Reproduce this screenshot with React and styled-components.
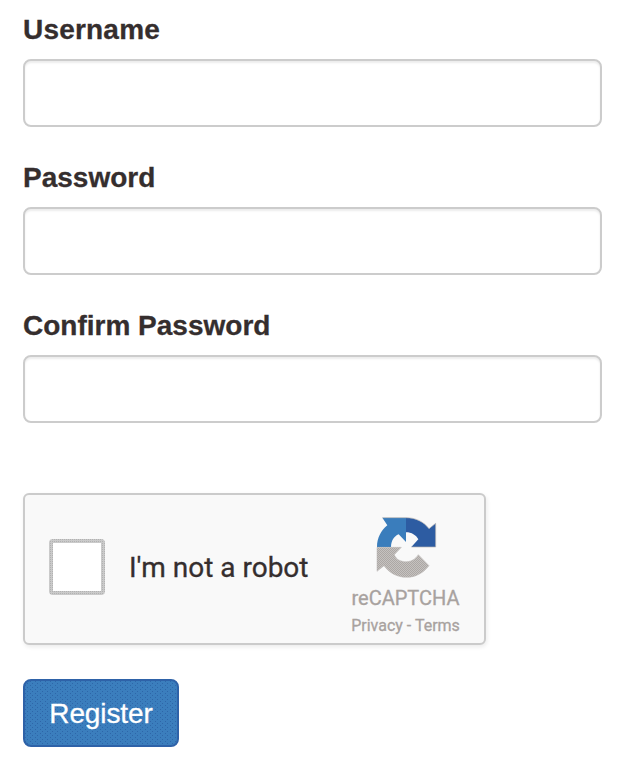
import React from "react";
import styled, { createGlobalStyle } from "styled-components";

const GlobalStyle = createGlobalStyle`
  * { box-sizing: border-box; }
  body { margin: 0; background: #fff; color: #352e2e; font-family: "Liberation Sans", Arial, sans-serif; }
`;

const Form = styled.form`
  display: flex;
  flex-direction: column;
  align-items: flex-start;
  width: 623px;
  height: 783px;
  padding: 9px 21px 0 23px;
`;

const Field = styled.div`
  display: flex;
  flex-direction: column;
  width: 100%;
  margin-bottom: 30px;
`;

const Label = styled.label`
  height: 40px;
  margin-bottom: 10px;
  padding-top: 1px;
  font-size: 28px;
  font-weight: 700;
  line-height: 40px;
  letter-spacing: ${(p) => p.$spacing || "0"};
  -webkit-text-stroke: 0.3px currentColor;
`;

const Input = styled.input`
  width: 579px;
  height: 68px;
  padding: 12px 24px;
  border: 2px solid #ccc;
  border-radius: 8px;
  background: #fff;
  box-shadow: inset 0 2px 2px rgba(0, 0, 0, 0.075);
  font: 28px "Liberation Sans", Arial, sans-serif;
  outline: none;
`;

const Captcha = styled.section`
  display: flex;
  width: 463px;
  height: 152px;
  margin-top: 40px;
  border: 2px solid #cbcbcb;
  border-radius: 6px;
  background: #f9f9f9;
  box-shadow: 1px 2px 4px rgba(0, 0, 0, 0.08);
  font-family: Roboto, sans-serif;
`;

const Check = styled.label`
  display: flex;
  flex: 1;
  align-items: center;
  padding: 0 0 4px 24px;
  font-size: 28px;
  white-space: nowrap;
  -webkit-text-stroke: 0.3px currentColor;
`;

const Checkbox = styled.input`
  appearance: none;
  width: 56px;
  height: 56px;
  margin: 0 24px 0 0;
  border: 4px solid transparent;
  border-radius: 4px;
  background:
    linear-gradient(#fff, #fff) padding-box,
    conic-gradient(#b2b2b2 25%, #cacaca 0) 0 0 / 2px 2px border-box;
`;

const Brand = styled.div`
  display: flex;
  flex-direction: column;
  align-items: center;
  width: 157px;
  padding-top: 18px;
  color: #a8a29f;
  -webkit-text-stroke: 0.3px currentColor;
`;

const Logo = styled.svg`
  display: block;
  width: 66px;
  height: 66px;
`;

const BrandName = styled.div`
  margin-top: 7px;
  font-size: 20px;
  line-height: 24px;
`;

const Legal = styled.div`
  margin-top: 6px;
  font-size: 16px;
  line-height: 20px;
`;

const Submit = styled.button`
  width: 156px;
  height: 68px;
  margin-top: 34px;
  padding: 2px 0 0;
  border: 2px solid #2e62a8;
  border-radius: 8px;
  background:
    radial-gradient(circle at 0.5px 0.5px, #2e66a9 0.6px, transparent 0.7px) 0 0 / 5px 4px,
    radial-gradient(circle at 0.5px 0.5px, #2e66a9 0.6px, transparent 0.7px) 2px 2px / 5px 4px,
    #3b7ebd;
  color: #fff;
  font: 28px "Liberation Sans", Arial, sans-serif;
  letter-spacing: -0.1px;
  -webkit-text-stroke: 0.3px currentColor;
`;

const fields = [
  { id: "username", label: "Username", type: "text", spacing: "0.2px" },
  { id: "password", label: "Password", type: "password" },
  { id: "confirm", label: "Confirm Password", type: "password" },
];

export default function App() {
  return (
    <>
      <GlobalStyle />
      <Form onSubmit={(e) => e.preventDefault()}>
        {fields.map((f) => (
          <Field key={f.id}>
            <Label htmlFor={f.id} $spacing={f.spacing}>{f.label}</Label>
            <Input id={f.id} type={f.type} />
          </Field>
        ))}
        <Captcha>
          <Check>
            <Checkbox type="checkbox" />
            I'm not a robot
          </Check>
          <Brand>
            <Logo viewBox="24 24 198 198">
              <defs>
                <pattern id="grain" width="6" height="6" patternUnits="userSpaceOnUse">
                  <path fill="#c5c2c0" d="M0 0H6V6H0Z" />
                  <path fill="#aca7a4" d="M0 0H3V3H0ZM3 3H6V6H3Z" />
                </pattern>
              </defs>
              <path fill="#3a7dbc" d="M123 38V111L101 88C87 94 78 108 78 126H36C36 100 48 76 67 61L52 38Z" />
              <path fill="#2d5ca2" d="M123 38C152 38 176 50 192 71L212 55V126H139L160 103C153 90 140 82 123 82Z" />
              <path fill="url(#grain)" stroke="#bab6b4" strokeWidth="1.5" d="M36 127H109L88 149C94 164 107 170 124 170C140 170 152 161 160 149L192 182C175 204 151 217 125 217C96 217 72 203 57 182L36 199Z" />
              <path fill="none" stroke="#b9b5b2" strokeWidth="2" d="M52 38H123C152 38 176 50 192 71L212 55V126H139" />
            </Logo>
            <BrandName>reCAPTCHA</BrandName>
            <Legal>Privacy - Terms</Legal>
          </Brand>
        </Captcha>
        <Submit type="submit">Register</Submit>
      </Form>
    </>
  );
}
